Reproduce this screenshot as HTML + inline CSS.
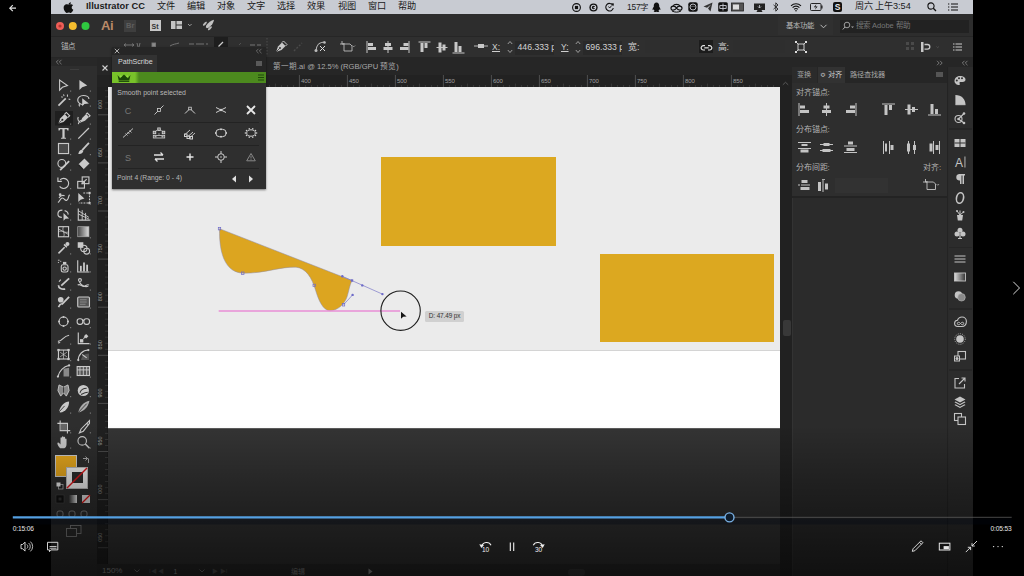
<!DOCTYPE html>
<html lang="zh-CN"><head><meta charset="utf-8">
<style>
*{margin:0;padding:0;box-sizing:border-box}
html,body{width:1024px;height:576px;overflow:hidden;background:#000;font-family:"Liberation Sans",sans-serif;position:relative}
.a{position:absolute}
.t{position:absolute;white-space:nowrap;line-height:1}
svg{position:absolute;overflow:visible}
</style></head><body>
<!-- ===== MAC MENU BAR ===== -->
<div class="a" style="left:51px;top:0;width:922px;height:14px;background:#c8cbd2"></div>
<div class="t" style="left:86px;top:2.200px;font-size:9.300px;font-weight:bold;color:#1a1a1a">Illustrator CC</div>
<svg style="left:64px;top:2px" width="10" height="11" viewBox="0 0 10 11"><path d="M6.9 0.2C7 1 6.7 1.7 6.2 2.2 5.8 2.7 5.1 3 4.500 2.900 4.400 2.200 4.800 1.500 5.200 1 5.700 0.500 6.400 0.200 6.900 0.200z" fill="#111"/><path d="M9.3 7.700C9 8.400 8.800 8.800 8.400 9.400 7.800 10.200 7.200 10.900 6.400 10.900 5.700 10.900 5.400 10.500 4.600 10.500 3.800 10.500 3.500 10.900 2.700 10.900 1.900 10.900 1.300 10.100 0.800 9.300-0.600 7.200-0.700 4.700 0.300 3.500 1 2.600 1.900 2.200 2.800 2.200 3.700 2.200 4.200 2.700 4.900 2.700 5.600 2.700 6 2.200 7 2.200 7.800 2.200 8.500 2.600 9.100 3.300 7.100 4.400 7.400 7.200 9.300 7.700z" fill="#111"/></svg>
<div class="t" style="left:157px;top:2.200px;font-size:9.200px;color:#1a1a1a">文件</div>
<div class="t" style="left:187px;top:2.200px;font-size:9.200px;color:#1a1a1a">编辑</div>
<div class="t" style="left:217px;top:2.200px;font-size:9.200px;color:#1a1a1a">对象</div>
<div class="t" style="left:247px;top:2.200px;font-size:9.200px;color:#1a1a1a">文字</div>
<div class="t" style="left:277px;top:2.200px;font-size:9.200px;color:#1a1a1a">选择</div>
<div class="t" style="left:307px;top:2.200px;font-size:9.200px;color:#1a1a1a">效果</div>
<div class="t" style="left:338px;top:2.200px;font-size:9.200px;color:#1a1a1a">视图</div>
<div class="t" style="left:368px;top:2.200px;font-size:9.200px;color:#1a1a1a">窗口</div>
<div class="t" style="left:398px;top:2.200px;font-size:9.200px;color:#1a1a1a">帮助</div>
<!-- status icons -->
<svg style="left:572px;top:2.500px" width="9" height="9"><circle cx="4.5" cy="4.5" r="3.9" fill="none" stroke="#111" stroke-width="1.1"/><rect x="2.900" y="2.900" width="3.200" height="3.200" fill="#111"/></svg>
<svg style="left:589px;top:3px" width="9" height="9"><circle cx="4.5" cy="4.5" r="4.1" fill="#111"/><circle cx="4.5" cy="4.5" r="2.2" fill="none" stroke="#c8cbd2" stroke-width="1.1"/><rect x="4.5" y="4" width="2.5" height="1.2" fill="#c8cbd2"/></svg>
<svg style="left:605px;top:2px" width="10" height="10"><path d="M7.8 3.2A3.8 3.8 0 1 0 8.3 6" fill="none" stroke="#111" stroke-width="1.1"/><path d="M6.2 1.2L9 1.6 8.3 4.2z" fill="#111"/><path d="M3.5 4.5l1.2 1.5 2-2.5" fill="none" stroke="#111" stroke-width="0.9"/></svg>
<div class="t" style="left:627px;top:2.700px;font-size:8.400px;color:#1a1a1a;letter-spacing:-0.2px">157字</div>
<svg style="left:652px;top:2px" width="9" height="11"><path d="M4.5 0.5C2.7 0.5 1.8 2 1.8 3.5v1.2C1 5.7 0.4 6.8 0.6 8c0.3 0.3 0.8-0.4 1-0.8 0.2 0.8 0.6 1.4 1.1 1.8-0.6 0.2-1 0.5-0.8 0.9 0.4 0.3 2 0.2 2.6-0.1 0.6 0.3 2.2 0.4 2.6 0.1 0.2-0.4-0.2-0.7-0.8-0.9 0.5-0.4 0.9-1 1.1-1.8 0.2 0.4 0.7 1.1 1 0.8 0.2-1.2-0.4-2.3-1.2-3.3V3.5C7.2 2 6.3 0.5 4.5 0.5z" fill="#111"/></svg>
<svg style="left:670px;top:2.500px" width="13" height="10"><path d="M6.500 5C5 2.500 1 2.500 1 5.200S5 7.800 6.500 5 12 2.500 12 5.200 8 7.800 6.500 5" fill="none" stroke="#111" stroke-width="1.200"/><path d="M3 3.200C4 0.800 9 0.800 10 3.200" fill="none" stroke="#111" stroke-width="1.100"/><path d="M2 8c3 1.500 6 1.500 9 0" fill="none" stroke="#111" stroke-width="1"/></svg>
<svg style="left:688px;top:2px" width="10" height="10"><rect x="0.3" y="0.3" width="9.4" height="9.4" rx="2" fill="#111"/><circle cx="5" cy="5" r="3" fill="none" stroke="#c8cbd2" stroke-width="0.9"/><circle cx="4" cy="4.3" r="0.5" fill="#c8cbd2"/><circle cx="6" cy="4.3" r="0.5" fill="#c8cbd2"/></svg>
<svg style="left:703px;top:2px" width="10" height="10"><path d="M0.5 4.5L9.5 0.5 7.5 9.5 5 6.5 8 2.5 4 5.8z" fill="#333"/></svg>
<svg style="left:718px;top:2px" width="10" height="10"><rect x="0.2" y="0.2" width="9.6" height="9.6" rx="1.5" fill="#111"/><path d="M5 1.5v7M1.8 3.5h6.4v3H1.8z" fill="none" stroke="#c8cbd2" stroke-width="0.9"/></svg>
<svg style="left:731px;top:2px" width="13" height="10"><rect x="0.5" y="1" width="12" height="8" fill="#555" stroke="#222" stroke-width="0.8"/><rect x="2" y="2.5" width="6" height="5" fill="#ddd"/></svg>
<svg style="left:753px;top:2px" width="13" height="11"><path d="M1 1.500h11v6.500H1z" fill="#222"/><path d="M4.500 8h4l1 2h-6z" fill="#222"/><path d="M6.500 3v3M5 4.500l1.500 1.500 1.500-1.500" stroke="#c8cbd2" stroke-width="0.800" fill="none"/></svg>
<svg style="left:773px;top:2px" width="6" height="10"><path d="M0.5 2.8L5 7 2.8 9.2V0.8L5 3 0.5 7.2" fill="none" stroke="#222" stroke-width="0.9"/></svg>
<svg style="left:790px;top:2px" width="12" height="10"><path d="M1 3.8a7 7 0 0 1 10 0M2.6 5.6a4.6 4.6 0 0 1 6.8 0M4.2 7.3a2.3 2.3 0 0 1 3.6 0" fill="none" stroke="#111" stroke-width="1.1"/><circle cx="6" cy="8.8" r="0.8" fill="#111"/></svg>
<svg style="left:810px;top:3px" width="13" height="8"><rect x="0.5" y="0.5" width="10.5" height="7" rx="1" fill="none" stroke="#111" stroke-width="0.9"/><rect x="11.3" y="2.5" width="1.2" height="3" fill="#111"/><path d="M6.5 1L3.8 4.3h2.2L4.8 7 7.6 3.6H5.4z" fill="#111"/></svg>
<svg style="left:833px;top:2px" width="9" height="10"><rect x="0" y="0" width="9" height="10" rx="2" fill="#111"/><text x="4.5" y="8" font-size="8.5" font-weight="bold" text-anchor="middle" fill="#e8e8e8" font-family="Liberation Sans">S</text></svg>
<div class="t" style="left:854.500px;top:2.200px;font-size:9.100px;color:#1a1a1a">周六 上午3:54</div>
<svg style="left:927px;top:2px" width="10" height="10"><circle cx="4" cy="4" r="3.1" fill="none" stroke="#111" stroke-width="1.1"/><path d="M6.3 6.3L9 9" stroke="#111" stroke-width="1.3"/></svg>
<svg style="left:948px;top:3px" width="10" height="8"><path d="M0 1h1.3M3 1h7M0 4h1.3M3 4h7M0 7h1.3M3 7h7" stroke="#111" stroke-width="1.1"/></svg>


<!-- ===== AI TITLE BAR ===== -->
<div class="a" style="left:51px;top:14px;width:922px;height:22px;background:#2d2d2d"></div>
<svg style="left:55px;top:21px" width="40" height="10"><circle cx="5" cy="5" r="4" fill="#ef5e57"/><circle cx="5" cy="5" r="1.6" fill="#8c1c18" opacity="0.6"/><circle cx="17.8" cy="5" r="4" fill="#f6be2e"/><circle cx="30.5" cy="5" r="4" fill="#2fc840"/></svg>
<div class="t" style="left:101px;top:18.500px;font-size:13px;color:#b98a68;font-weight:bold;letter-spacing:-0.5px">Ai</div>
<div class="a" style="left:124px;top:19.500px;width:12px;height:12px;background:#3e3e3e"></div>
<div class="t" style="left:126px;top:22px;font-size:7.500px;color:#5e5e5e;font-weight:bold">Br</div>
<div class="a" style="left:150px;top:20px;width:11px;height:11px;background:#c8c8c8"></div>
<div class="t" style="left:151.5px;top:22.5px;font-size:7px;color:#333;font-weight:bold">St</div>
<svg style="left:171px;top:21px" width="24" height="10"><rect x="0" y="0" width="4.5" height="8" fill="#c4c4c4"/><rect x="5.5" y="0" width="5.5" height="3.5" fill="#c4c4c4"/><rect x="5.5" y="4.5" width="5.5" height="3.5" fill="#c4c4c4"/><path d="M17 3l1.8 1.8L20.6 3" fill="none" stroke="#aaa" stroke-width="0.9"/></svg>
<svg style="left:200px;top:17px" width="16" height="16" viewBox="200 17 16 16"><path d="M214 19.800C211 20.300 208.300 22.500 206.200 25.600L205.800 27.200 206.900 28.300 208.500 27.800C211.500 25.700 213.600 23 214 19.800z" fill="#c4c4c4"/><ellipse cx="204.900" cy="23.700" rx="2.600" ry="1.100" transform="rotate(-45 204.900 23.700)" fill="#b8b8b8"/><ellipse cx="209.900" cy="28.300" rx="2.600" ry="1.100" transform="rotate(-45 209.900 28.300)" fill="#b8b8b8"/></svg>
<div class="a" style="left:777.500px;top:15px;width:55.500px;height:20px;background:#303030"></div>
<div class="t" style="left:786px;top:21.5px;font-size:7.400px;color:#bbb">基本功能</div>
<svg style="left:820px;top:24px" width="7" height="5"><path d="M0.5 0.8L3.500 3.800 6.500 0.800" fill="none" stroke="#bbb" stroke-width="1"/></svg>
<div class="a" style="left:839.500px;top:19.500px;width:129.500px;height:13px;background:#222222"></div>
<svg style="left:842px;top:21px" width="14" height="10"><circle cx="5" cy="4" r="2.8" fill="none" stroke="#aaa" stroke-width="0.9"/><path d="M3 6L0.8 8.5" stroke="#aaa" stroke-width="1"/><path d="M9 5.5l1.500 1.500 1.500-1.500z" fill="#aaa"/></svg>
<div class="t" style="left:856px;top:21.5px;font-size:7.5px;color:#777">搜索 Adobe 帮助</div>
<!-- ===== CONTROL BAR ===== -->
<div class="a" style="left:51px;top:35.500px;width:922px;height:1px;background:#262626"></div>
<div class="a" style="left:51px;top:36.500px;width:922px;height:20px;background:#2f2f2f"></div>
<div class="a" style="left:51px;top:56.500px;width:922px;height:1.500px;background:#262626"></div>
<div class="t" style="left:61px;top:42.5px;font-size:7.5px;color:#bdbdbd">锚点</div>
<!-- faint icons under panel -->
<svg style="left:122px;top:40.500px" width="150" height="8"><g stroke="#7a7a7a" stroke-width="0.9" fill="none"><path d="M2 4h10M2 4l2-1.5M2 4l2 1.5M12 4l-2-1.5M12 4l-2 1.5"/><path d="M15 2l1 4M18 2l-1 4"/><rect x="30" y="2" width="3.5" height="3.5" fill="#8a8a8a"/><path d="M48 5c3-2 6-2 9-3"/><path d="M67 3h5M74 3h8M84 3h2"/></g><rect x="92" y="-4" width="14" height="13" fill="#1e1e1e"/><path d="M96.500 5.500l4.500-4.500" stroke="#ccc" stroke-width="1.2"/><path d="M117 4l2-2" stroke="#555" stroke-width="0.9"/><path d="M128 4h5M135 4h4" stroke="#777" stroke-width="1"/></svg>
<svg style="left:266px;top:38px" width="3" height="18"><path d="M1 0v18" stroke="#555" stroke-width="0.8" stroke-dasharray="1.5 1.5"/></svg>
<!-- pen icon -->
<svg style="left:275px;top:40px" width="13" height="13"><path d="M1 12L3 6.500 7 2.500 10.500 6 6.500 10z" fill="#c8c8c8"/><path d="M7 2.500L8.500 1 12 4.500 10.500 6" fill="none" stroke="#c8c8c8" stroke-width="1"/><path d="M1 12l3.500-3.500" stroke="#2c2c2c" stroke-width="0.8"/><circle cx="5" cy="8" r="0.9" fill="#2c2c2c"/></svg>
<svg style="left:293px;top:41px" width="11" height="11"><path d="M1 10l8-8" stroke="#4a4a4a" stroke-width="1.4" stroke-dasharray="2 1.5"/></svg>
<svg style="left:314px;top:40px" width="13" height="13"><path d="M2 11c0-5 3-9 9-9" fill="none" stroke="#bbb" stroke-width="1.1"/><circle cx="10.500" cy="2.500" r="1.300" fill="#bbb"/><circle cx="2" cy="10.500" r="1.500" fill="#bbb"/><path d="M6 6l5 5M11 6l-5 5" stroke="#ddd" stroke-width="1"/></svg>
<svg style="left:340px;top:41px" width="16" height="11"><path d="M2 0v3h8l2 2v5H4V2" fill="none" stroke="#bbb" stroke-width="0.9"/><path d="M0 3h4" stroke="#bbb" stroke-width="0.9"/><path d="M12.500 4.500l1.300 1.300 1.300-1.300" fill="none" stroke="#aaa" stroke-width="0.8"/></svg>
<!-- align icons -->
<svg style="left:366px;top:40px" width="100" height="14"><g fill="#c8c8c8">
<rect x="0.500" y="1" width="1" height="12"/><rect x="2" y="3" width="5" height="3"/><rect x="2" y="7" width="8" height="3"/>
<rect x="21.500" y="1" width="1" height="12"/><rect x="19" y="3" width="6" height="3"/><rect x="17.500" y="7" width="9" height="3"/>
<rect x="42.500" y="1" width="1" height="12"/><rect x="37.500" y="3" width="5" height="3"/><rect x="34" y="7" width="8.500" height="3"/>
<rect x="52.500" y="1.500" width="12" height="1"/><rect x="54.500" y="3" width="3" height="9"/><rect x="58.500" y="3" width="3" height="5"/>
<rect x="70.500" y="7" width="11" height="1"/><rect x="72.500" y="2.500" width="3" height="10"/><rect x="76.500" y="4.500" width="3" height="6"/>
<rect x="86.500" y="12.500" width="12" height="1"/><rect x="88.500" y="2" width="3" height="10"/><rect x="92.500" y="6" width="3" height="6"/></g></svg>
<svg style="left:474px;top:42px" width="14" height="8"><path d="M0 4h14" stroke="#bbb" stroke-width="1"/><rect x="4" y="2" width="6" height="4" fill="#c8c8c8"/></svg>
<div class="t" style="left:492px;top:43px;font-size:8.500px;color:#cfcfcf;text-decoration:underline">X:</div>
<svg style="left:507px;top:40px" width="6" height="14"><path d="M0.800 4L3 1.500 5.200 4M0.800 10L3 12.500 5.200 10" fill="none" stroke="#aaa" stroke-width="0.9"/></svg>
<div class="a" style="left:515px;top:40.500px;width:38.500px;height:14px;background:#292929;overflow:hidden"><div class="t" style="left:2.500px;top:2.500px;font-size:8.700px;color:#d2d2d2">446.333 p</div></div>
<div class="t" style="left:561px;top:43px;font-size:8.500px;color:#cfcfcf;text-decoration:underline">Y:</div>
<svg style="left:575px;top:40px" width="6" height="14"><path d="M0.800 4L3 1.500 5.200 4M0.800 10L3 12.500 5.200 10" fill="none" stroke="#aaa" stroke-width="0.9"/></svg>
<div class="a" style="left:583px;top:40.500px;width:39px;height:14px;background:#292929;overflow:hidden"><div class="t" style="left:2.500px;top:2.500px;font-size:8.700px;color:#d2d2d2">696.333 p</div></div>
<div class="t" style="left:628px;top:42.500px;font-size:8.800px;color:#cfcfcf">宽:</div>
<div class="a" style="left:645px;top:40px;width:53px;height:13px;background:#2e2e2e"></div>
<div class="a" style="left:699px;top:40px;width:14px;height:13.300px;background:#1c1c1c"></div>
<svg style="left:700.500px;top:44.500px" width="11" height="6"><path d="M4 0.700H2.300a2.100 2.100 0 0 0 0 4.300H4M7 0.700h1.700a2.100 2.100 0 0 1 0 4.300H7" fill="none" stroke="#e0e0e0" stroke-width="1.200"/><path d="M3.300 2.850h4.400" stroke="#e0e0e0" stroke-width="1.200"/></svg>
<div class="t" style="left:717.500px;top:42.500px;font-size:8.800px;color:#cfcfcf">高:</div>
<div class="a" style="left:733px;top:40px;width:52px;height:13px;background:#2e2e2e"></div>
<svg style="left:795px;top:41px" width="12" height="12"><g fill="none" stroke="#ccc" stroke-width="1"><rect x="3" y="3" width="6" height="6"/><path d="M0.500 0.500l3 3M11.500 0.500l-3 3M0.500 11.500l3-3M11.500 11.500l-3-3"/></g><g fill="#ddd"><rect x="0" y="0" width="2" height="2"/><rect x="10" y="0" width="2" height="2"/><rect x="0" y="10" width="2" height="2"/><rect x="10" y="10" width="2" height="2"/></g></svg>
<svg style="left:906px;top:42px" width="8" height="8"><g fill="#4a4a4a"><rect x="0" y="0" width="3" height="3"/><rect x="5" y="0" width="3" height="3"/><rect x="0" y="5" width="3" height="3"/><rect x="5" y="5" width="3" height="3"/></g></svg>
<svg style="left:921px;top:41px" width="20" height="12"><rect x="0" y="1" width="2.500" height="10" fill="#c8c8c8"/><path d="M3.500 3.500h3a2.300 2.300 0 0 1 0 4.600h-3" fill="none" stroke="#c8c8c8" stroke-width="1.300"/><path d="M15.500 5.500l1.200 1.200 1.200-1.200" fill="none" stroke="#555" stroke-width="0.8"/></svg>
<svg style="left:953px;top:43px" width="9" height="8"><path d="M0 1h1.500M2.500 1H9M0 4h1.500M2.500 4H9M0 7h1.500M2.500 7H9" stroke="#ccc" stroke-width="1.100"/></svg>

<!-- ===== LEFT TOOLBAR ===== -->
<div class="a" style="left:51px;top:58px;width:46px;height:518px;background:#2e2e2e"></div>
<div class="a" style="left:51px;top:58px;width:46px;height:8px;background:#282828"></div>
<svg style="left:55px;top:59px" width="8" height="6"><path d="M3.500 0.800L1.300 3 3.500 5.200M6.500 0.800L4.300 3 6.500 5.200" fill="none" stroke="#888" stroke-width="0.800"/></svg>
<div class="a" style="left:70px;top:69px;width:9px;height:1px;background:#3d3d3d"></div>

<svg style="left:51px;top:58px" width="46" height="400" viewBox="51 58 46 400">
<rect x="55" y="111" width="18" height="14.500" fill="#1f1f1f"/>
<g transform="translate(56.80,78.30) scale(1.12)"><path d="M2.500 1.500L2.500 10.500 5 8 9.500 6.500z" fill="none" stroke="#c9c9c9" stroke-width="1"/></g>
<rect x="70.0" y="90.5" width="1.2" height="1.2" fill="#777"/>
<g transform="translate(76.60,78.30) scale(1.12)"><path d="M2.500 1.500L2.500 10.500 5 8 9.500 6.500z" fill="#c9c9c9"/></g>
<rect x="89.8" y="90.5" width="1.2" height="1.2" fill="#777"/>
<g transform="translate(56.80,93.30) scale(1.12)"><path d="M1.500 11L8 4.500" stroke="#c9c9c9" stroke-width="1.500"/><path d="M6 1l0.500 1.500M9.500 1v2M10.500 5l1.500 0.500M4 3l1.300 0.500" stroke="#c9c9c9" stroke-width="0.900"/></g>
<rect x="70.0" y="105.5" width="1.2" height="1.2" fill="#777"/>
<g transform="translate(76.60,93.30) scale(1.12)"><path d="M6 10c-3 0-5-2-5-4s2-4 5-4 5 1.500 5 3" fill="none" stroke="#c9c9c9" stroke-width="1"/><path d="M5 4.500L5 11.500 7 9.500 11 9z" fill="#c9c9c9"/><path d="M3 9c-1 1-1 2 0 2.500" fill="none" stroke="#c9c9c9" stroke-width="1"/></g>
<rect x="89.8" y="105.5" width="1.2" height="1.2" fill="#777"/>
<g transform="translate(56.80,111.30) scale(1.12)"><path d="M1.500 11L3 6.500 7 2.500 10 5.500 6 9.500z" fill="#c9c9c9"/><path d="M7 2.500L8.500 1 11.500 4 10 5.500" fill="none" stroke="#c9c9c9" stroke-width="1"/><circle cx="5" cy="7.500" r="0.900" fill="#222"/><path d="M1.500 11L4.500 8" stroke="#222" stroke-width="0.600"/></g>
<rect x="70.0" y="123.5" width="1.2" height="1.2" fill="#777"/>
<g transform="translate(76.60,111.30) scale(1.12)"><path d="M3.500 10L5 6 8.500 2.500 11 5 7.500 8.500z" fill="#c9c9c9"/><path d="M8.500 2.500L9.500 1.500 12 4 11 5" fill="none" stroke="#c9c9c9" stroke-width="1"/><path d="M5 8c-2 0-3 1.500-3.500 3.500" fill="none" stroke="#c9c9c9" stroke-width="1"/><path d="M1.500 5c-1 2 0 4 2 5" fill="none" stroke="#c9c9c9" stroke-width="1"/></g>
<rect x="89.8" y="123.5" width="1.2" height="1.2" fill="#777"/>
<g transform="translate(56.80,126.30) scale(1.12)"><path d="M1.500 1.500h9v2.200h-1l-0.500-1h-2v7.500h1.200v1H3.800v-1H5V2.700H3l-0.500 1h-1z" fill="#c9c9c9"/></g>
<rect x="70.0" y="138.5" width="1.2" height="1.2" fill="#777"/>
<g transform="translate(76.60,126.30) scale(1.12)"><path d="M1.500 11L11 1.500" stroke="#c9c9c9" stroke-width="1.100"/></g>
<rect x="89.8" y="138.5" width="1.2" height="1.2" fill="#777"/>
<g transform="translate(56.80,141.80) scale(1.12)"><rect x="1.500" y="1.500" width="9" height="9" fill="#4a4a4a" stroke="#c9c9c9" stroke-width="1"/></g>
<rect x="70.0" y="154.0" width="1.2" height="1.2" fill="#777"/>
<g transform="translate(76.60,141.80) scale(1.12)"><path d="M11 1L5 7.500" stroke="#c9c9c9" stroke-width="1.600"/><path d="M4.500 7c-2 0-2.500 2-3 4 2 0 4-0.500 4.500-3z" fill="#c9c9c9"/></g>
<rect x="89.8" y="154.0" width="1.2" height="1.2" fill="#777"/>
<g transform="translate(56.80,157.30) scale(1.12)"><circle cx="4.500" cy="5.500" r="3.500" fill="none" stroke="#c9c9c9" stroke-width="1"/><path d="M3 11.500L11 3.500" stroke="#c9c9c9" stroke-width="1.600"/></g>
<rect x="70.0" y="169.5" width="1.2" height="1.2" fill="#777"/>
<g transform="translate(76.60,157.30) scale(1.12)"><path d="M7 1L11.500 5.500 6 11 1.500 6.500z" fill="#c9c9c9"/><path d="M1.500 6.500L6 11" stroke="#222" stroke-width="1.200"/></g>
<rect x="89.8" y="169.5" width="1.2" height="1.2" fill="#777"/>
<g transform="translate(56.80,175.80) scale(1.12)"><path d="M3 3.500a4.500 4.500 0 1 1-0.500 6" fill="none" stroke="#c9c9c9" stroke-width="1"/><path d="M1 1.500v3.500h3.500" fill="none" stroke="#c9c9c9" stroke-width="1"/></g>
<rect x="70.0" y="188.0" width="1.2" height="1.2" fill="#777"/>
<g transform="translate(76.60,175.80) scale(1.12)"><rect x="1" y="5" width="6" height="6" fill="none" stroke="#c9c9c9" stroke-width="1"/><rect x="5" y="1" width="6" height="6" fill="none" stroke="#c9c9c9" stroke-width="1"/><path d="M4.500 7.500L9 3" fill="none" stroke="#c9c9c9" stroke-width="1"/></g>
<rect x="89.8" y="188.0" width="1.2" height="1.2" fill="#777"/>
<g transform="translate(56.80,191.30) scale(1.12)"><path d="M1 10c2-1 2-4 4-4s2 3 4 2 1-4 2.500-5" fill="none" stroke="#c9c9c9" stroke-width="1"/><path d="M2 6c1-2 3-3 5-2" fill="none" stroke="#c9c9c9" stroke-width="1"/><circle cx="3" cy="3" r="1.200" fill="#c9c9c9"/></g>
<rect x="70.0" y="203.5" width="1.2" height="1.2" fill="#777"/>
<g transform="translate(76.60,191.30) scale(1.12)"><path d="M1.500 1.500L1.500 9.500 3.500 7.500 7 6.500z" fill="#c9c9c9"/><path d="M6 1.500h5.500v9H2" fill="none" stroke="#c9c9c9" stroke-width="0.900" stroke-dasharray="1.600 1"/><rect x="10.500" y="0.500" width="2" height="2" fill="#c9c9c9"/><rect x="10.500" y="9.500" width="2" height="2" fill="#c9c9c9"/></g>
<rect x="89.8" y="203.5" width="1.2" height="1.2" fill="#777"/>
<g transform="translate(56.80,207.30) scale(1.12)"><path d="M5 2.500c-2.500 0-4 1.500-4 3.500s1.500 3 3.500 3" fill="none" stroke="#c9c9c9" stroke-width="1"/><path d="M7 3c2 0.500 3.500 2 3 3.500" fill="none" stroke="#c9c9c9" stroke-width="1"/><path d="M6 5L6 12 7.800 10.200 11 10z" fill="#c9c9c9"/></g>
<rect x="70.0" y="219.5" width="1.2" height="1.2" fill="#777"/>
<g transform="translate(76.60,207.30) scale(1.12)"><path d="M1.500 1v10.500h10.500" fill="none" stroke="#c9c9c9" stroke-width="1"/><path d="M1.500 3L11 9M1.500 6L11 10.500M5 2.500v9M8 5v6.500" fill="none" stroke="#c9c9c9" stroke-width="0.800"/></g>
<rect x="89.8" y="219.5" width="1.2" height="1.2" fill="#777"/>
<g transform="translate(56.80,225.00) scale(1.12)"><rect x="1.500" y="1.500" width="9" height="9" fill="none" stroke="#c9c9c9" stroke-width="1"/><path d="M1.500 6c3-2 6 2 9 0M6 1.500c-2 3 2 6 0 9M1.500 3.500l9 5" fill="none" stroke="#c9c9c9" stroke-width="0.700"/></g>
<rect x="70.0" y="237.2" width="1.2" height="1.2" fill="#777"/>
<g transform="translate(76.60,225.00) scale(1.12)"><defs><linearGradient id="g1"><stop offset="0" stop-color="#444"/><stop offset="1" stop-color="#ddd"/></linearGradient></defs><rect x="1" y="1.500" width="10" height="9" fill="url(#g1)" stroke="#aaa" stroke-width="0.600"/></g>
<rect x="89.8" y="237.2" width="1.2" height="1.2" fill="#777"/>
<g transform="translate(56.80,241.10) scale(1.12)"><path d="M1.500 11L7 5.500" stroke="#c9c9c9" stroke-width="1.400"/><path d="M6.500 3L9 5.500" stroke="#c9c9c9" stroke-width="1.500"/><circle cx="9.500" cy="2.500" r="1.800" fill="#c9c9c9"/></g>
<rect x="70.0" y="253.3" width="1.2" height="1.2" fill="#777"/>
<g transform="translate(76.60,241.10) scale(1.12)"><rect x="1" y="1" width="5" height="5" fill="#c9c9c9"/><circle cx="6.500" cy="6.500" r="2.800" fill="none" stroke="#c9c9c9" stroke-width="1"/><circle cx="9" cy="9" r="2.600" fill="none" stroke="#c9c9c9" stroke-width="1"/></g>
<rect x="89.8" y="253.3" width="1.2" height="1.2" fill="#777"/>
<g transform="translate(56.80,259.10) scale(1.12)"><rect x="4" y="5" width="6" height="6.500" rx="1.500" fill="none" stroke="#c9c9c9" stroke-width="1"/><circle cx="7" cy="8.500" r="1.500" fill="none" stroke="#c9c9c9" stroke-width="1"/><rect x="5.500" y="2.500" width="3" height="2" fill="#c9c9c9"/><path d="M1 1h1.500M1 3h1M3 2h1" stroke="#c9c9c9" stroke-width="0.800"/></g>
<rect x="70.0" y="271.3" width="1.2" height="1.2" fill="#777"/>
<g transform="translate(76.60,259.10) scale(1.12)"><path d="M1 1v10.500h10.500" fill="none" stroke="#c9c9c9" stroke-width="1"/><rect x="3" y="6" width="1.600" height="5" fill="#c9c9c9"/><rect x="5.800" y="3" width="1.600" height="8" fill="#c9c9c9"/><rect x="8.600" y="5" width="1.600" height="6" fill="#c9c9c9"/></g>
<rect x="89.8" y="271.3" width="1.2" height="1.2" fill="#777"/>
<g transform="translate(56.80,277.30) scale(1.12)"><path d="M1.500 7c0 3 3 4 6 3.500" stroke="#c9c9c9" stroke-width="1.500" fill="none"/><path d="M4 7.500L11 1" stroke="#c9c9c9" stroke-width="1.600"/><path d="M2 4L3.500 2" stroke="#c9c9c9" stroke-width="1"/></g>
<rect x="70.0" y="289.5" width="1.2" height="1.2" fill="#777"/>
<g transform="translate(76.60,277.30) scale(1.12)"><path d="M1 7c2-2 4 2 6 1s3-2 4-1" fill="none" stroke="#c9c9c9" stroke-width="1"/><path d="M2.500 4c1.500 3 4 5 8 4" fill="none" stroke="#c9c9c9" stroke-width="1"/><circle cx="3" cy="2.500" r="1.300" fill="none" stroke="#c9c9c9" stroke-width="1"/></g>
<rect x="89.8" y="289.5" width="1.2" height="1.2" fill="#777"/>
<g transform="translate(56.80,295.30) scale(1.12)"><path d="M11 1.500L4.500 8" stroke="#c9c9c9" stroke-width="1.600"/><circle cx="3.500" cy="4" r="2.500" fill="#c9c9c9"/><path d="M1.500 10.500c1-2 2-3 3-2.500" stroke="#c9c9c9" stroke-width="1.500"/></g>
<rect x="70.0" y="307.5" width="1.2" height="1.2" fill="#777"/>
<g transform="translate(76.60,295.30) scale(1.12)"><rect x="1" y="1.500" width="10.500" height="9" rx="1" fill="#555" stroke="#c9c9c9" stroke-width="1"/><path d="M3 4h6M3 6h6M3 8h5" stroke="#999" stroke-width="0.700"/></g>
<rect x="89.8" y="307.5" width="1.2" height="1.2" fill="#777"/>
<g transform="translate(56.80,314.80) scale(1.12)"><circle cx="6" cy="6" r="4" fill="none" stroke="#c9c9c9" stroke-width="1"/><circle cx="6" cy="2" r="0.900" fill="#c9c9c9"/><circle cx="2" cy="6" r="0.900" fill="#c9c9c9"/><circle cx="10" cy="6" r="0.900" fill="#c9c9c9"/><circle cx="6" cy="10" r="0.900" fill="#c9c9c9"/></g>
<rect x="70.0" y="327.0" width="1.2" height="1.2" fill="#777"/>
<g transform="translate(76.60,314.80) scale(1.12)"><rect x="0.500" y="3.500" width="5" height="5" rx="2" fill="none" stroke="#c9c9c9" stroke-width="1"/><rect x="6.500" y="3.500" width="5" height="5" rx="2" fill="none" stroke="#c9c9c9" stroke-width="1"/><path d="M5.500 5h1" fill="none" stroke="#c9c9c9" stroke-width="1"/></g>
<rect x="89.8" y="327.0" width="1.2" height="1.2" fill="#777"/>
<g transform="translate(56.80,331.30) scale(1.12)"><path d="M1 9c2 0 3-1 4.500-2.500S8 4 11 3.500" fill="none" stroke="#c9c9c9" stroke-width="1"/><path d="M1 10.500l2-0.500" fill="none" stroke="#c9c9c9" stroke-width="1"/></g>
<rect x="70.0" y="343.5" width="1.2" height="1.2" fill="#777"/>
<g transform="translate(76.60,331.30) scale(1.12)"><path d="M1.500 1v10h10" fill="none" stroke="#c9c9c9" stroke-width="1"/><rect x="3" y="7" width="3" height="3" fill="#c9c9c9"/><path d="M8.500 2.500l2 2-2 2-2-2z" fill="#c9c9c9"/><path d="M6 6.500L8 5" fill="none" stroke="#c9c9c9" stroke-width="1"/></g>
<rect x="89.8" y="343.5" width="1.2" height="1.2" fill="#777"/>
<g transform="translate(56.80,347.80) scale(1.12)"><rect x="1.500" y="2" width="9" height="8" fill="none" stroke="#c9c9c9" stroke-width="1"/><path d="M3 4l6 4M9 4L3 8M6 2v8" fill="none" stroke="#c9c9c9" stroke-width="0.600"/><g fill="#c9c9c9"><rect x="0.500" y="1" width="2" height="2"/><rect x="9.500" y="1" width="2" height="2"/><rect x="0.500" y="9" width="2" height="2"/><rect x="9.500" y="9" width="2" height="2"/></g></g>
<rect x="70.0" y="360.0" width="1.2" height="1.2" fill="#777"/>
<g transform="translate(76.60,347.80) scale(1.12)"><path d="M1.500 11c0-5 4-9 9-9" fill="none" stroke="#c9c9c9" stroke-width="1"/><path d="M4 11c0-3 3-6 7-6v6z" fill="#555"/><path d="M5 6l4 3" fill="none" stroke="#c9c9c9" stroke-width="1"/><circle cx="1.500" cy="11" r="1" fill="#c9c9c9"/><circle cx="10.500" cy="2" r="1" fill="#c9c9c9"/></g>
<rect x="89.8" y="360.0" width="1.2" height="1.2" fill="#777"/>
<g transform="translate(56.80,364.30) scale(1.12)"><path d="M1 11c1-5 5-9 10-10" fill="none" stroke="#c9c9c9" stroke-width="1"/><path d="M6 4v7h5V3z" fill="#888"/><circle cx="1" cy="11" r="1" fill="#c9c9c9"/><circle cx="11" cy="1" r="1" fill="#c9c9c9"/></g>
<rect x="70.0" y="376.5" width="1.2" height="1.2" fill="#777"/>
<g transform="translate(76.60,364.30) scale(1.12)"><rect x="0.500" y="2" width="11" height="8" fill="#555" stroke="#c9c9c9" stroke-width="1"/><path d="M3 2v8M6 2v8M9 2v8M0.500 5h11" stroke="#c9c9c9" stroke-width="0.800"/></g>
<rect x="89.8" y="376.5" width="1.2" height="1.2" fill="#777"/>
<g transform="translate(56.80,383.80) scale(1.12)"><path d="M6 3L2 1 1 6 3.500 11 6 8 8.500 11 11 6 10 1z" fill="#888" stroke="#c9c9c9" stroke-width="0.800"/><path d="M6 3v5" stroke="#333" stroke-width="0.800"/></g>
<rect x="70.0" y="396.0" width="1.2" height="1.2" fill="#777"/>
<g transform="translate(76.60,383.80) scale(1.12)"><circle cx="6" cy="6" r="5" fill="#c9c9c9"/><path d="M3 8c1-3 3-4 6-4M4 9.500c2-1 4-2 6-2" stroke="#333" stroke-width="0.900" fill="none"/></g>
<rect x="89.8" y="396.0" width="1.2" height="1.2" fill="#777"/>
<g transform="translate(56.80,400.30) scale(1.12)"><path d="M11 1c-4 0-8 4-9 9l1 1c5-1 8-5 8-10z" fill="#c9c9c9"/><path d="M1 11.500L7 5" stroke="#333" stroke-width="0.800"/></g>
<rect x="70.0" y="412.5" width="1.2" height="1.2" fill="#777"/>
<g transform="translate(76.60,400.30) scale(1.12)"><path d="M11.500 0.500c-5 1-9 5-10 10.500 5-1 9-5 10-10.500z" fill="#aaa"/><path d="M1 11.500L9 3" stroke="#333" stroke-width="0.800"/></g>
<rect x="89.8" y="412.5" width="1.2" height="1.2" fill="#777"/>
<g transform="translate(56.80,420.00) scale(1.12)"><path d="M3 0.500v9h9" fill="none" stroke="#c9c9c9" stroke-width="1"/><path d="M0.500 3h9v9" fill="none" stroke="#c9c9c9" stroke-width="1"/><rect x="3.500" y="3.500" width="5.500" height="5.500" fill="#666"/></g>
<rect x="70.0" y="432.2" width="1.2" height="1.2" fill="#777"/>
<g transform="translate(76.60,420.00) scale(1.12)"><path d="M11.500 0.500L4 8 2.500 11.500 6 10 11.500 3z" fill="none" stroke="#c9c9c9" stroke-width="1"/><path d="M9 3l1 1" fill="none" stroke="#c9c9c9" stroke-width="1"/></g>
<rect x="89.8" y="432.2" width="1.2" height="1.2" fill="#777"/>
<g transform="translate(56.80,435.30) scale(1.12)"><path d="M3 11.500c-1-1-2.500-3-2.500-4.500 0-0.800 1.200-0.800 1.800 0l1 1.200V2.500c0-0.900 1.300-0.900 1.300 0V6V1.500c0-0.900 1.400-0.900 1.400 0V6V2c0-0.900 1.400-0.900 1.400 0v4.500V3.500c0-0.900 1.300-0.900 1.300 0V8c0 2-1 3.500-2 3.500z" fill="#c9c9c9"/></g>
<rect x="70.0" y="447.5" width="1.2" height="1.2" fill="#777"/>
<g transform="translate(76.60,435.30) scale(1.12)"><circle cx="5" cy="5" r="3.800" fill="none" stroke="#c9c9c9" stroke-width="1"/><path d="M7.800 7.800L11.500 11.500" stroke="#c9c9c9" stroke-width="1.400"/></g>
<rect x="89.8" y="447.5" width="1.2" height="1.2" fill="#777"/>
</svg>
<!-- fill / stroke -->
<div class="a" style="left:55px;top:455px;width:21.500px;height:21.500px;background:#eaaa1e;border:1px solid #d0d0d0"></div>
<div class="a" style="left:66px;top:466.500px;width:22px;height:22px;background:#f4f4f4;border:1px solid #bbb"></div>
<div class="a" style="left:71.500px;top:472px;width:11px;height:11px;background:#2e2e2e"></div>
<svg style="left:66px;top:466.500px" width="22" height="22"><path d="M1 21L21 1" stroke="#e0161b" stroke-width="1.500"/></svg>
<svg style="left:82px;top:455px" width="8" height="9"><path d="M1 3.500h4.500M3.500 1.500L5.500 3.500 3.500 5.500M6.500 3.500V8" fill="none" stroke="#c9c9c9" stroke-width="0.800"/></svg>
<svg style="left:56px;top:482px" width="8" height="7"><rect x="2.500" y="2.500" width="4.500" height="4.500" fill="#222" stroke="#ccc" stroke-width="0.700"/><rect x="0.500" y="0.500" width="4" height="4" fill="#eee"/></svg>
<svg style="left:55px;top:494px" width="36" height="10"><rect x="1" y="1" width="8" height="8" fill="#111" stroke="#444" stroke-width="0.600"/><rect x="3.500" y="3.500" width="3" height="3" fill="#333"/>
<defs><linearGradient id="g2"><stop offset="0" stop-color="#333"/><stop offset="1" stop-color="#eee"/></linearGradient></defs><rect x="14" y="1" width="8" height="8" fill="url(#g2)"/>
<rect x="27" y="1" width="8" height="8" fill="#ddd"/><path d="M27 9L35 1" stroke="#d11" stroke-width="1.200"/></svg>
<svg style="left:55px;top:509px" width="36" height="8"><g fill="none" stroke="#8a8a8a" stroke-width="0.900"><rect x="2" y="2" width="6" height="6" rx="2"/><rect x="14" y="2" width="6" height="6" rx="2"/><rect x="26" y="2" width="6" height="6" rx="2"/></g></svg>
<svg style="left:66px;top:525px" width="16" height="12"><rect x="4.500" y="0.500" width="10.500" height="8" fill="none" stroke="#888" stroke-width="0.900"/><rect x="0.500" y="3.500" width="10" height="8" fill="#2e2e2e" stroke="#888" stroke-width="0.900"/></svg>

<div class="a" style="left:97px;top:58px;width:11px;height:518px;background:#202020"></div>
<div class="a" style="left:107px;top:87px;width:1px;height:489px;background:#1a1a1a"></div>
<svg style="left:97px;top:87px" width="11" height="489" viewBox="0 87 11 489"><path d="M1 114.8H11" stroke="#555" stroke-width="0.8"/><path d="M8 90.7H11" stroke="#444" stroke-width="0.6"/><path d="M8 96.8H11" stroke="#444" stroke-width="0.6"/><path d="M8 102.8H11" stroke="#444" stroke-width="0.6"/><path d="M8 108.8H11" stroke="#444" stroke-width="0.6"/><text transform="translate(3.2,104.3) rotate(-90)" font-size="5.500" fill="#9a9a9a" text-anchor="middle" font-family="Liberation Sans" dominant-baseline="middle">600</text><path d="M1 162.9H11" stroke="#555" stroke-width="0.8"/><path d="M8 120.8H11" stroke="#444" stroke-width="0.6"/><path d="M8 126.8H11" stroke="#444" stroke-width="0.6"/><path d="M8 132.8H11" stroke="#444" stroke-width="0.6"/><path d="M8 138.8H11" stroke="#444" stroke-width="0.6"/><path d="M8 144.8H11" stroke="#444" stroke-width="0.6"/><path d="M8 150.9H11" stroke="#444" stroke-width="0.6"/><path d="M8 156.9H11" stroke="#444" stroke-width="0.6"/><text transform="translate(3.2,152.4) rotate(-90)" font-size="5.500" fill="#9a9a9a" text-anchor="middle" font-family="Liberation Sans" dominant-baseline="middle">650</text><path d="M1 211.0H11" stroke="#555" stroke-width="0.8"/><path d="M8 168.9H11" stroke="#444" stroke-width="0.6"/><path d="M8 174.9H11" stroke="#444" stroke-width="0.6"/><path d="M8 180.9H11" stroke="#444" stroke-width="0.6"/><path d="M8 186.9H11" stroke="#444" stroke-width="0.6"/><path d="M8 193.0H11" stroke="#444" stroke-width="0.6"/><path d="M8 199.0H11" stroke="#444" stroke-width="0.6"/><path d="M8 205.0H11" stroke="#444" stroke-width="0.6"/><text transform="translate(3.2,200.5) rotate(-90)" font-size="5.500" fill="#9a9a9a" text-anchor="middle" font-family="Liberation Sans" dominant-baseline="middle">700</text><path d="M1 259.1H11" stroke="#555" stroke-width="0.8"/><path d="M8 217.0H11" stroke="#444" stroke-width="0.6"/><path d="M8 223.0H11" stroke="#444" stroke-width="0.6"/><path d="M8 229.0H11" stroke="#444" stroke-width="0.6"/><path d="M8 235.0H11" stroke="#444" stroke-width="0.6"/><path d="M8 241.1H11" stroke="#444" stroke-width="0.6"/><path d="M8 247.1H11" stroke="#444" stroke-width="0.6"/><path d="M8 253.1H11" stroke="#444" stroke-width="0.6"/><text transform="translate(3.2,248.6) rotate(-90)" font-size="5.500" fill="#9a9a9a" text-anchor="middle" font-family="Liberation Sans" dominant-baseline="middle">750</text><path d="M1 307.2H11" stroke="#555" stroke-width="0.8"/><path d="M8 265.1H11" stroke="#444" stroke-width="0.6"/><path d="M8 271.1H11" stroke="#444" stroke-width="0.6"/><path d="M8 277.1H11" stroke="#444" stroke-width="0.6"/><path d="M8 283.1H11" stroke="#444" stroke-width="0.6"/><path d="M8 289.1H11" stroke="#444" stroke-width="0.6"/><path d="M8 295.2H11" stroke="#444" stroke-width="0.6"/><path d="M8 301.2H11" stroke="#444" stroke-width="0.6"/><text transform="translate(3.2,296.7) rotate(-90)" font-size="5.500" fill="#9a9a9a" text-anchor="middle" font-family="Liberation Sans" dominant-baseline="middle">800</text><path d="M1 355.3H11" stroke="#555" stroke-width="0.8"/><path d="M8 313.2H11" stroke="#444" stroke-width="0.6"/><path d="M8 319.2H11" stroke="#444" stroke-width="0.6"/><path d="M8 325.2H11" stroke="#444" stroke-width="0.6"/><path d="M8 331.2H11" stroke="#444" stroke-width="0.6"/><path d="M8 337.2H11" stroke="#444" stroke-width="0.6"/><path d="M8 343.3H11" stroke="#444" stroke-width="0.6"/><path d="M8 349.3H11" stroke="#444" stroke-width="0.6"/><text transform="translate(3.2,344.8) rotate(-90)" font-size="5.500" fill="#9a9a9a" text-anchor="middle" font-family="Liberation Sans" dominant-baseline="middle">850</text><path d="M1 403.4H11" stroke="#555" stroke-width="0.8"/><path d="M8 361.3H11" stroke="#444" stroke-width="0.6"/><path d="M8 367.3H11" stroke="#444" stroke-width="0.6"/><path d="M8 373.3H11" stroke="#444" stroke-width="0.6"/><path d="M8 379.3H11" stroke="#444" stroke-width="0.6"/><path d="M8 385.4H11" stroke="#444" stroke-width="0.6"/><path d="M8 391.4H11" stroke="#444" stroke-width="0.6"/><path d="M8 397.4H11" stroke="#444" stroke-width="0.6"/><text transform="translate(3.2,392.9) rotate(-90)" font-size="5.500" fill="#9a9a9a" text-anchor="middle" font-family="Liberation Sans" dominant-baseline="middle">900</text><path d="M1 451.5H11" stroke="#555" stroke-width="0.8"/><path d="M8 409.4H11" stroke="#444" stroke-width="0.6"/><path d="M8 415.4H11" stroke="#444" stroke-width="0.6"/><path d="M8 421.4H11" stroke="#444" stroke-width="0.6"/><path d="M8 427.4H11" stroke="#444" stroke-width="0.6"/><path d="M8 433.4H11" stroke="#444" stroke-width="0.6"/><path d="M8 439.5H11" stroke="#444" stroke-width="0.6"/><path d="M8 445.5H11" stroke="#444" stroke-width="0.6"/><text transform="translate(3.2,441.0) rotate(-90)" font-size="5.500" fill="#9a9a9a" text-anchor="middle" font-family="Liberation Sans" dominant-baseline="middle">950</text><path d="M1 499.6H11" stroke="#555" stroke-width="0.8"/><path d="M8 457.5H11" stroke="#444" stroke-width="0.6"/><path d="M8 463.5H11" stroke="#444" stroke-width="0.6"/><path d="M8 469.5H11" stroke="#444" stroke-width="0.6"/><path d="M8 475.5H11" stroke="#444" stroke-width="0.6"/><path d="M8 481.5H11" stroke="#444" stroke-width="0.6"/><path d="M8 487.6H11" stroke="#444" stroke-width="0.6"/><path d="M8 493.6H11" stroke="#444" stroke-width="0.6"/><text transform="translate(3.2,489.1) rotate(-90)" font-size="5.500" fill="#9a9a9a" text-anchor="middle" font-family="Liberation Sans" dominant-baseline="middle">000</text><path d="M1 547.7H11" stroke="#555" stroke-width="0.8"/><path d="M8 505.6H11" stroke="#444" stroke-width="0.6"/><path d="M8 511.6H11" stroke="#444" stroke-width="0.6"/><path d="M8 517.6H11" stroke="#444" stroke-width="0.6"/><path d="M8 523.6H11" stroke="#444" stroke-width="0.6"/><path d="M8 529.6H11" stroke="#444" stroke-width="0.6"/><path d="M8 535.7H11" stroke="#444" stroke-width="0.6"/><path d="M8 541.7H11" stroke="#444" stroke-width="0.6"/><text transform="translate(3.2,537.2) rotate(-90)" font-size="5.500" fill="#9a9a9a" text-anchor="middle" font-family="Liberation Sans" dominant-baseline="middle">050</text></svg>
<div class="a" style="left:97px;top:56.500px;width:695px;height:18.500px;background:#262626"></div>
<svg style="left:101px;top:64px" width="8" height="8"><path d="M1.500 1.500L6.500 6.500M6.500 1.500L1.500 6.500" stroke="#d0d0d0" stroke-width="1.100"/></svg>
<div class="t" style="left:273px;top:63px;font-size:7.6px;color:#a8a8a8">第一期.ai @ 12.5% (RGB/GPU 预览)</div>
<div class="a" style="left:97px;top:75px;width:683px;height:12px;background:#222222"></div>

<svg style="left:108px;top:75px" width="672" height="12" viewBox="108 75 672 12"><path d="M113.4 85V87" stroke="#4a4a4a" stroke-width="0.6"/><path d="M119.4 85V87" stroke="#4a4a4a" stroke-width="0.6"/><path d="M125.4 85V87" stroke="#4a4a4a" stroke-width="0.6"/><path d="M131.4 83.5V87" stroke="#4a4a4a" stroke-width="0.6"/><path d="M137.4 85V87" stroke="#4a4a4a" stroke-width="0.6"/><path d="M143.5 85V87" stroke="#4a4a4a" stroke-width="0.6"/><path d="M149.5 85V87" stroke="#4a4a4a" stroke-width="0.6"/><path d="M155.4 75V87" stroke="#5a5a5a" stroke-width="0.8"/><text x="156.9" y="82.8" font-size="6" fill="#a0a0a0" font-family="Liberation Sans">250</text><path d="M161.4 85V87" stroke="#4a4a4a" stroke-width="0.6"/><path d="M167.4 85V87" stroke="#4a4a4a" stroke-width="0.6"/><path d="M173.4 85V87" stroke="#4a4a4a" stroke-width="0.6"/><path d="M179.4 83.5V87" stroke="#4a4a4a" stroke-width="0.6"/><path d="M185.4 85V87" stroke="#4a4a4a" stroke-width="0.6"/><path d="M191.5 85V87" stroke="#4a4a4a" stroke-width="0.6"/><path d="M197.5 85V87" stroke="#4a4a4a" stroke-width="0.6"/><path d="M203.4 75V87" stroke="#5a5a5a" stroke-width="0.8"/><text x="204.9" y="82.8" font-size="6" fill="#a0a0a0" font-family="Liberation Sans">300</text><path d="M209.4 85V87" stroke="#4a4a4a" stroke-width="0.6"/><path d="M215.4 85V87" stroke="#4a4a4a" stroke-width="0.6"/><path d="M221.4 85V87" stroke="#4a4a4a" stroke-width="0.6"/><path d="M227.4 83.5V87" stroke="#4a4a4a" stroke-width="0.6"/><path d="M233.4 85V87" stroke="#4a4a4a" stroke-width="0.6"/><path d="M239.5 85V87" stroke="#4a4a4a" stroke-width="0.6"/><path d="M245.5 85V87" stroke="#4a4a4a" stroke-width="0.6"/><path d="M251.4 75V87" stroke="#5a5a5a" stroke-width="0.8"/><text x="252.9" y="82.8" font-size="6" fill="#a0a0a0" font-family="Liberation Sans">350</text><path d="M257.4 85V87" stroke="#4a4a4a" stroke-width="0.6"/><path d="M263.4 85V87" stroke="#4a4a4a" stroke-width="0.6"/><path d="M269.4 85V87" stroke="#4a4a4a" stroke-width="0.6"/><path d="M275.4 83.5V87" stroke="#4a4a4a" stroke-width="0.6"/><path d="M281.4 85V87" stroke="#4a4a4a" stroke-width="0.6"/><path d="M287.5 85V87" stroke="#4a4a4a" stroke-width="0.6"/><path d="M293.5 85V87" stroke="#4a4a4a" stroke-width="0.6"/><path d="M299.4 75V87" stroke="#5a5a5a" stroke-width="0.8"/><text x="300.9" y="82.8" font-size="6" fill="#a0a0a0" font-family="Liberation Sans">400</text><path d="M305.4 85V87" stroke="#4a4a4a" stroke-width="0.6"/><path d="M311.4 85V87" stroke="#4a4a4a" stroke-width="0.6"/><path d="M317.4 85V87" stroke="#4a4a4a" stroke-width="0.6"/><path d="M323.4 83.5V87" stroke="#4a4a4a" stroke-width="0.6"/><path d="M329.4 85V87" stroke="#4a4a4a" stroke-width="0.6"/><path d="M335.5 85V87" stroke="#4a4a4a" stroke-width="0.6"/><path d="M341.5 85V87" stroke="#4a4a4a" stroke-width="0.6"/><path d="M347.4 75V87" stroke="#5a5a5a" stroke-width="0.8"/><text x="348.9" y="82.8" font-size="6" fill="#a0a0a0" font-family="Liberation Sans">450</text><path d="M353.4 85V87" stroke="#4a4a4a" stroke-width="0.6"/><path d="M359.4 85V87" stroke="#4a4a4a" stroke-width="0.6"/><path d="M365.4 85V87" stroke="#4a4a4a" stroke-width="0.6"/><path d="M371.4 83.5V87" stroke="#4a4a4a" stroke-width="0.6"/><path d="M377.4 85V87" stroke="#4a4a4a" stroke-width="0.6"/><path d="M383.5 85V87" stroke="#4a4a4a" stroke-width="0.6"/><path d="M389.5 85V87" stroke="#4a4a4a" stroke-width="0.6"/><path d="M395.4 75V87" stroke="#5a5a5a" stroke-width="0.8"/><text x="396.9" y="82.8" font-size="6" fill="#a0a0a0" font-family="Liberation Sans">500</text><path d="M401.4 85V87" stroke="#4a4a4a" stroke-width="0.6"/><path d="M407.4 85V87" stroke="#4a4a4a" stroke-width="0.6"/><path d="M413.4 85V87" stroke="#4a4a4a" stroke-width="0.6"/><path d="M419.4 83.5V87" stroke="#4a4a4a" stroke-width="0.6"/><path d="M425.4 85V87" stroke="#4a4a4a" stroke-width="0.6"/><path d="M431.5 85V87" stroke="#4a4a4a" stroke-width="0.6"/><path d="M437.5 85V87" stroke="#4a4a4a" stroke-width="0.6"/><path d="M443.4 75V87" stroke="#5a5a5a" stroke-width="0.8"/><text x="444.9" y="82.8" font-size="6" fill="#a0a0a0" font-family="Liberation Sans">550</text><path d="M449.4 85V87" stroke="#4a4a4a" stroke-width="0.6"/><path d="M455.4 85V87" stroke="#4a4a4a" stroke-width="0.6"/><path d="M461.4 85V87" stroke="#4a4a4a" stroke-width="0.6"/><path d="M467.4 83.5V87" stroke="#4a4a4a" stroke-width="0.6"/><path d="M473.4 85V87" stroke="#4a4a4a" stroke-width="0.6"/><path d="M479.5 85V87" stroke="#4a4a4a" stroke-width="0.6"/><path d="M485.5 85V87" stroke="#4a4a4a" stroke-width="0.6"/><path d="M491.4 75V87" stroke="#5a5a5a" stroke-width="0.8"/><text x="492.9" y="82.8" font-size="6" fill="#a0a0a0" font-family="Liberation Sans">600</text><path d="M497.4 85V87" stroke="#4a4a4a" stroke-width="0.6"/><path d="M503.4 85V87" stroke="#4a4a4a" stroke-width="0.6"/><path d="M509.4 85V87" stroke="#4a4a4a" stroke-width="0.6"/><path d="M515.4 83.5V87" stroke="#4a4a4a" stroke-width="0.6"/><path d="M521.4 85V87" stroke="#4a4a4a" stroke-width="0.6"/><path d="M527.5 85V87" stroke="#4a4a4a" stroke-width="0.6"/><path d="M533.5 85V87" stroke="#4a4a4a" stroke-width="0.6"/><path d="M539.4 75V87" stroke="#5a5a5a" stroke-width="0.8"/><text x="540.9" y="82.8" font-size="6" fill="#a0a0a0" font-family="Liberation Sans">650</text><path d="M545.4 85V87" stroke="#4a4a4a" stroke-width="0.6"/><path d="M551.4 85V87" stroke="#4a4a4a" stroke-width="0.6"/><path d="M557.4 85V87" stroke="#4a4a4a" stroke-width="0.6"/><path d="M563.4 83.5V87" stroke="#4a4a4a" stroke-width="0.6"/><path d="M569.4 85V87" stroke="#4a4a4a" stroke-width="0.6"/><path d="M575.5 85V87" stroke="#4a4a4a" stroke-width="0.6"/><path d="M581.5 85V87" stroke="#4a4a4a" stroke-width="0.6"/><path d="M587.4 75V87" stroke="#5a5a5a" stroke-width="0.8"/><text x="588.9" y="82.8" font-size="6" fill="#a0a0a0" font-family="Liberation Sans">700</text><path d="M593.4 85V87" stroke="#4a4a4a" stroke-width="0.6"/><path d="M599.4 85V87" stroke="#4a4a4a" stroke-width="0.6"/><path d="M605.4 85V87" stroke="#4a4a4a" stroke-width="0.6"/><path d="M611.4 83.5V87" stroke="#4a4a4a" stroke-width="0.6"/><path d="M617.4 85V87" stroke="#4a4a4a" stroke-width="0.6"/><path d="M623.5 85V87" stroke="#4a4a4a" stroke-width="0.6"/><path d="M629.5 85V87" stroke="#4a4a4a" stroke-width="0.6"/><path d="M635.4 75V87" stroke="#5a5a5a" stroke-width="0.8"/><text x="636.9" y="82.8" font-size="6" fill="#a0a0a0" font-family="Liberation Sans">750</text><path d="M641.4 85V87" stroke="#4a4a4a" stroke-width="0.6"/><path d="M647.4 85V87" stroke="#4a4a4a" stroke-width="0.6"/><path d="M653.4 85V87" stroke="#4a4a4a" stroke-width="0.6"/><path d="M659.4 83.5V87" stroke="#4a4a4a" stroke-width="0.6"/><path d="M665.4 85V87" stroke="#4a4a4a" stroke-width="0.6"/><path d="M671.5 85V87" stroke="#4a4a4a" stroke-width="0.6"/><path d="M677.5 85V87" stroke="#4a4a4a" stroke-width="0.6"/><path d="M683.4 75V87" stroke="#5a5a5a" stroke-width="0.8"/><text x="684.9" y="82.8" font-size="6" fill="#a0a0a0" font-family="Liberation Sans">800</text><path d="M689.4 85V87" stroke="#4a4a4a" stroke-width="0.6"/><path d="M695.4 85V87" stroke="#4a4a4a" stroke-width="0.6"/><path d="M701.4 85V87" stroke="#4a4a4a" stroke-width="0.6"/><path d="M707.4 83.5V87" stroke="#4a4a4a" stroke-width="0.6"/><path d="M713.4 85V87" stroke="#4a4a4a" stroke-width="0.6"/><path d="M719.5 85V87" stroke="#4a4a4a" stroke-width="0.6"/><path d="M725.5 85V87" stroke="#4a4a4a" stroke-width="0.6"/><path d="M731.4 75V87" stroke="#5a5a5a" stroke-width="0.8"/><text x="732.9" y="82.8" font-size="6" fill="#a0a0a0" font-family="Liberation Sans">850</text><path d="M737.4 85V87" stroke="#4a4a4a" stroke-width="0.6"/><path d="M743.4 85V87" stroke="#4a4a4a" stroke-width="0.6"/><path d="M749.4 85V87" stroke="#4a4a4a" stroke-width="0.6"/><path d="M755.4 83.5V87" stroke="#4a4a4a" stroke-width="0.6"/><path d="M761.4 85V87" stroke="#4a4a4a" stroke-width="0.6"/><path d="M767.5 85V87" stroke="#4a4a4a" stroke-width="0.6"/><path d="M773.5 85V87" stroke="#4a4a4a" stroke-width="0.6"/></svg>
<!-- canvas -->
<div class="a" style="left:108px;top:87px;width:672px;height:264px;background:#ebebeb"></div>
<div class="a" style="left:108px;top:350px;width:672px;height:1px;background:#d4d4d4"></div>
<div class="a" style="left:108px;top:351px;width:672px;height:77px;background:#ffffff"></div>
<div class="a" style="left:108px;top:428px;width:672px;height:148px;background:#343434"></div>
<div class="a" style="left:108px;top:427.500px;width:672px;height:1px;background:#5a5a5a"></div>
<!-- scrollbar strip -->
<div class="a" style="left:780px;top:75px;width:12px;height:501px;background:#2a2a2a"></div>

<!-- orange rects -->
<div class="a" style="left:381px;top:157px;width:175px;height:89px;background:#dca820"></div>
<div class="a" style="left:600px;top:254px;width:174px;height:88px;background:#dca820"></div>

<!-- shape -->
<svg style="left:0;top:0" width="1024" height="576" viewBox="0 0 1024 576">
<path d="M219.500 228.700 L352 280.500 C349.500 285 349 291 347 297 C344.500 304 338 310.500 330 310.700 C323 310.800 318.500 300 315.500 290 C312 278 306 268 296 267.200 C280 266.500 265 273.500 243 273.200 C226 272.500 219 255 219.500 228.700 Z" fill="#dca520" stroke="#8d8aa8" stroke-width="0.5"/>
<g stroke="#7b78c8" stroke-width="0.7" fill="none">
<path d="M342.300 276.300 L382.400 294.100"/>
<path d="M343.500 304.800 L352.600 294.900"/>
</g>
<g fill="#6d6ac8">
<rect x="218.300" y="227.500" width="2.400" height="2.400" fill="none" stroke="#6d6ac8" stroke-width="0.7"/>
<rect x="241.600" y="272" width="2.400" height="2.400" fill="none" stroke="#6d6ac8" stroke-width="0.7"/>
<rect x="313" y="284.200" width="2.400" height="2.400" fill="none" stroke="#6d6ac8" stroke-width="0.7"/>
<rect x="342.300" y="303.600" width="2.400" height="2.400" fill="none" stroke="#6d6ac8" stroke-width="0.7"/>
<rect x="350.800" y="279.300" width="2.400" height="2.400"/>
<circle cx="342.300" cy="276.300" r="1.200"/>
<circle cx="362.300" cy="285.400" r="1.200"/>
<circle cx="382.400" cy="294.100" r="1.200"/>
<circle cx="352.600" cy="294.900" r="1.200"/>
</g>
<path d="M218.700 311 H400" stroke="#e98ed6" stroke-width="1.300"/>
<circle cx="400.600" cy="310.700" r="19.700" fill="none" stroke="#1f1f1f" stroke-width="1.100"/>
<path d="M401 311.800 L401 318.800 L403.200 316.800 L406.600 316.600 Z" fill="#151515"/>
</svg>
<div class="a" style="left:425.300px;top:311.200px;width:38.700px;height:10.500px;background:#d0d0d0;border-radius:1.500px"></div>
<div class="t" style="left:428.800px;top:313.300px;font-size:6.4px;color:#303030;letter-spacing:-0.1px">D: 47.49 px</div>

<!-- ===== PATHSCRIBE PANEL ===== -->
<div class="a" style="left:111.500px;top:46.500px;width:154.300px;height:142.300px;background:#2f2f2f;box-shadow:0 1px 2px rgba(0,0,0,0.5)"></div>
<div class="a" style="left:111.500px;top:46.500px;width:154.300px;height:25.500px;background:#262626"></div>
<svg style="left:114px;top:47.500px" width="6" height="6"><path d="M0.800 0.800L5.200 5.200M5.200 0.800L0.800 5.200" stroke="#bbb" stroke-width="0.900"/></svg>
<svg style="left:255px;top:48px" width="8" height="6"><path d="M3.500 0.800L1.300 3 3.500 5.200M6.500 0.800L4.300 3 6.500 5.200" fill="none" stroke="#777" stroke-width="0.800"/></svg>
<div class="a" style="left:111.500px;top:55px;width:45.500px;height:17px;background:#323232"></div>
<div class="t" style="left:118px;top:58.800px;font-size:7.100px;color:#d8d8d8">PathScribe</div>
<div class="a" style="left:255.500px;top:60.500px;width:6px;height:5px;background:#5a5a5a"></div>
<div class="a" style="left:111.500px;top:72px;width:154.300px;height:11px;background:#4c8a1e"></div>
<div class="a" style="left:111.500px;top:72px;width:23px;height:11px;background:#78c22a"></div>
<div class="a" style="left:134.500px;top:72px;width:4px;height:11px;background:linear-gradient(to right,#78c22a,#4c8a1e)"></div>
<svg style="left:116.500px;top:73.500px" width="14" height="8"><path d="M0.500 1L3.200 4.200 7 0.600 10.800 4.200 13.500 1 12.300 6.200H1.700z" fill="#1a4508"/><circle cx="3.800" cy="2.200" r="0.900" fill="#8fd84a"/><circle cx="10.200" cy="2.200" r="0.900" fill="#8fd84a"/><rect x="1.700" y="6.600" width="10.600" height="1.300" fill="#1a4508"/></svg>
<svg style="left:257.500px;top:74px" width="6" height="7"><path d="M0 1h6M0 3.500h6M0 6h6" stroke="#1f4a0a" stroke-width="1.200"/></svg>
<div class="t" style="left:117.300px;top:89.500px;font-size:6.950px;color:#b8b8b8">Smooth point selected</div>

<div class="a" style="left:117.500px;top:121.5px;width:141.500px;height:1px;background:#232323"></div>
<div class="a" style="left:117.500px;top:144.5px;width:141.500px;height:1px;background:#232323"></div>
<div class="a" style="left:117.500px;top:167.8px;width:141.500px;height:1px;background:#232323"></div>
<svg style="left:122.0px;top:103.7px" width="12" height="12"><text x="6" y="9.500" font-size="9" fill="#777" text-anchor="middle" font-family="Liberation Sans">C</text></svg>
<svg style="left:153.0px;top:103.7px" width="12" height="12"><path d="M1.500 10.500L10.500 1.500" stroke="#d0d0d0" stroke-width="0.900"/><rect x="4.500" y="4.500" width="3" height="3" fill="#2f2f2f" stroke="#d0d0d0" stroke-width="0.800"/></svg>
<svg style="left:183.7px;top:103.7px" width="12" height="12"><path d="M1 9.500L6 4.500 11 9.500" fill="none" stroke="#d0d0d0" stroke-width="1"/><rect x="4.700" y="3.200" width="2.600" height="2.600" fill="#2f2f2f" stroke="#d0d0d0" stroke-width="0.800"/></svg>
<svg style="left:214.9px;top:103.7px" width="12" height="12"><path d="M1 3.500L11 8.500M1 8.500L11 3.500" stroke="#d0d0d0" stroke-width="1"/><circle cx="6" cy="6" r="1.200" fill="#d0d0d0"/></svg>
<svg style="left:245.0px;top:103.7px" width="12" height="12"><path d="M2 2L10 10M10 2L2 10" stroke="#e8e8e8" stroke-width="1.800"/></svg>
<svg style="left:122.0px;top:127.0px" width="12" height="12"><path d="M1 10.500L11 1.500" stroke="#d0d0d0" stroke-width="0.900"/><path d="M3.500 6.500l2 2M5.500 5l2 2M7.500 3.500l2 2" stroke="#d0d0d0" stroke-width="0.800"/></svg>
<svg style="left:153.0px;top:127.0px" width="12" height="12"><path d="M1.500 5.500c2-3.500 7-3.500 9 0" fill="none" stroke="#d0d0d0" stroke-width="0.900" stroke-dasharray="1.200 0.800"/><rect x="0.300" y="4.300" width="2.400" height="2.400" fill="none" stroke="#d0d0d0" stroke-width="1"/><rect x="9.300" y="4.300" width="2.400" height="2.400" fill="none" stroke="#d0d0d0" stroke-width="1"/><rect x="4.800" y="1" width="2.400" height="2.400" fill="none" stroke="#d0d0d0" stroke-width="1"/><rect x="0.300" y="8.500" width="11.400" height="2.500" fill="none" stroke="#d0d0d0" stroke-width="0.800"/><rect x="1.500" y="9.200" width="2" height="1.200" fill="#d0d0d0"/><rect x="8.500" y="9.200" width="2" height="1.200" fill="#d0d0d0"/><path d="M5.300 7h1.400" stroke="#d0d0d0" stroke-width="0.800"/></svg>
<svg style="left:183.7px;top:127.0px" width="12" height="12"><path d="M1 7.500L6 3M4 9.500L9 5M6 10.500l5-4.500" stroke="#d0d0d0" stroke-width="0.900"/><rect x="0.500" y="7" width="2.500" height="2.500" fill="none" stroke="#d0d0d0" stroke-width="1"/><rect x="3" y="9" width="2.500" height="2.500" fill="none" stroke="#d0d0d0" stroke-width="1"/><rect x="6" y="9.500" width="2.500" height="2.500" fill="none" stroke="#d0d0d0" stroke-width="1"/></svg>
<svg style="left:214.9px;top:127.0px" width="12" height="12"><rect x="0.800" y="2.300" width="10.400" height="7.400" rx="3.700" fill="none" stroke="#d0d0d0" stroke-width="1"/><g fill="#d0d0d0"><rect x="0" y="5.200" width="1.600" height="1.600"/><rect x="10.400" y="5.200" width="1.600" height="1.600"/><rect x="5.200" y="1.500" width="1.600" height="1.600"/><rect x="5.200" y="8.900" width="1.600" height="1.600"/></g></svg>
<svg style="left:245.0px;top:127.0px" width="12" height="12"><ellipse cx="6" cy="6" rx="4.300" ry="3.200" fill="none" stroke="#d0d0d0" stroke-width="1"/><g fill="#d0d0d0"><circle cx="11.60" cy="6.00" r="0.750"/><circle cx="10.53" cy="8.59" r="0.750"/><circle cx="7.73" cy="10.18" r="0.750"/><circle cx="4.27" cy="10.18" r="0.750"/><circle cx="1.47" cy="8.59" r="0.750"/><circle cx="0.40" cy="6.00" r="0.750"/><circle cx="1.47" cy="3.41" r="0.750"/><circle cx="4.27" cy="1.82" r="0.750"/><circle cx="7.73" cy="1.82" r="0.750"/><circle cx="10.53" cy="3.41" r="0.750"/></g></svg>
<svg style="left:122.0px;top:151.4px" width="12" height="12"><text x="6" y="9.500" font-size="9" fill="#777" text-anchor="middle" font-family="Liberation Sans">S</text></svg>
<svg style="left:153.0px;top:151.4px" width="12" height="12"><path d="M1 4h9M7.500 1.500L10 4M11 8H2M4.500 10.500L2 8" stroke="#e0e0e0" stroke-width="1.300" fill="none"/></svg>
<svg style="left:183.7px;top:151.4px" width="12" height="12"><path d="M6 2.500v7M2.500 6h7" stroke="#e8e8e8" stroke-width="1.400"/></svg>
<svg style="left:214.9px;top:151.4px" width="12" height="12"><circle cx="6" cy="6" r="3.300" fill="none" stroke="#d0d0d0" stroke-width="1"/><path d="M6 0v2.500M6 9.500V12M0 6h2.500M9.500 6H12" stroke="#d0d0d0" stroke-width="1"/><circle cx="6" cy="6" r="0.800" fill="#d0d0d0"/></svg>
<svg style="left:245.0px;top:151.4px" width="12" height="12"><path d="M6 2.500L10.300 9.800H1.700z" fill="none" stroke="#888" stroke-width="1"/><path d="M6 5v2.500M6 8.300v0.800" stroke="#888" stroke-width="0.900"/></svg>
<div class="t" style="left:117px;top:175px;font-size:6.8px;color:#b8b8b8">Point 4 (Range: 0 - 4)</div>
<svg style="left:231px;top:175px" width="6" height="8"><path d="M5 0.500L1 4 5 7.500z" fill="#e0e0e0"/></svg>
<svg style="left:248px;top:175px" width="6" height="8"><path d="M1 0.500L5 4 1 7.500z" fill="#e0e0e0"/></svg>

<!-- ===== RIGHT PANEL ===== -->
<div class="a" style="left:792px;top:58px;width:181px;height:518px;background:#2b2b2b"></div>
<div class="a" style="left:780px;top:75px;width:12px;height:501px;background:#212121"></div>
<div class="a" style="left:791.500px;top:83px;width:1px;height:493px;background:#333"></div>
<div class="a" style="left:783px;top:320px;width:7.500px;height:15.500px;border-radius:2px;background:#383838"></div>
<svg style="left:782px;top:81px" width="7" height="5"><path d="M0.800 3.800L3.500 1.300 6.200 3.800" fill="none" stroke="#666" stroke-width="0.800"/></svg>
<div class="a" style="left:792px;top:58px;width:181px;height:8.500px;background:#262626"></div>
<svg style="left:936px;top:59.500px" width="8" height="6"><path d="M1 0.800L3.200 3 1 5.200M4 0.800L6.200 3 4 5.200" fill="none" stroke="#8a8a8a" stroke-width="0.800"/></svg>
<svg style="left:961px;top:59.500px" width="8" height="6"><path d="M3.500 0.800L1.300 3 3.500 5.200M6.500 0.800L4.300 3 6.500 5.200" fill="none" stroke="#8a8a8a" stroke-width="0.800"/></svg>
<!-- tab row -->
<div class="a" style="left:792px;top:66.500px;width:154.500px;height:16.500px;background:#262626"></div>
<div class="a" style="left:792px;top:66.500px;width:25px;height:16.500px;background:#2b2b2b"></div>
<div class="a" style="left:818px;top:66.500px;width:26.500px;height:16.500px;background:#323232"></div>
<div class="t" style="left:797px;top:70.500px;font-size:7.2px;color:#a8a8a8">变换</div>
<div class="t" style="left:820px;top:70.500px;font-size:7.2px;color:#cfcfcf">≎ 对齐</div>
<div class="t" style="left:850px;top:70.500px;font-size:7.2px;color:#a8a8a8">路径查找器</div>
<div class="a" style="left:936px;top:72px;width:7px;height:5px;background:#555"></div>
<!-- panel body -->
<div class="a" style="left:792px;top:83px;width:154.500px;height:113px;background:#2e2e2e"></div>
<div class="a" style="left:792px;top:196px;width:154.500px;height:1.500px;background:#232323"></div>
<div class="t" style="left:795.500px;top:88.500px;font-size:8px;color:#b4b4b4">对齐锚点:</div>
<div class="t" style="left:795.500px;top:126px;font-size:8px;color:#b4b4b4">分布锚点:</div>
<div class="t" style="left:795.500px;top:164px;font-size:8px;color:#b4b4b4">分布间距:</div>
<div class="t" style="left:923px;top:164px;font-size:8px;color:#b4b4b4">对齐:</div>
<div class="a" style="left:835px;top:178px;width:53px;height:14.500px;background:#323232"></div>

<svg style="left:797.5px;top:102.5px" width="13" height="13"><rect x="0.500" y="0" width="1" height="13" fill="#c4c4c4"/><rect x="2" y="2.500" width="5" height="3" fill="#c4c4c4"/><rect x="2" y="7" width="9" height="3" fill="#c4c4c4"/></svg>
<svg style="left:820.0px;top:102.5px" width="13" height="13"><rect x="6" y="0" width="1" height="13" fill="#c4c4c4"/><rect x="3.500" y="2.500" width="6" height="3" fill="#c4c4c4"/><rect x="2" y="7" width="9" height="3" fill="#c4c4c4"/></svg>
<svg style="left:843.9px;top:102.5px" width="13" height="13"><rect x="11.500" y="0" width="1" height="13" fill="#c4c4c4"/><rect x="6" y="2.500" width="5" height="3" fill="#c4c4c4"/><rect x="2" y="7" width="9" height="3" fill="#c4c4c4"/></svg>
<svg style="left:881.5px;top:102.5px" width="13" height="13"><rect x="0" y="0.500" width="13" height="1" fill="#c4c4c4"/><rect x="2.500" y="2" width="3" height="10" fill="#c4c4c4"/><rect x="7" y="2" width="3" height="5" fill="#c4c4c4"/></svg>
<svg style="left:905.0px;top:102.5px" width="13" height="13"><rect x="0" y="6" width="13" height="1" fill="#c4c4c4"/><rect x="2.500" y="1.500" width="3" height="10" fill="#c4c4c4"/><rect x="7" y="4" width="3" height="5" fill="#c4c4c4"/></svg>
<svg style="left:927.9px;top:102.5px" width="13" height="13"><rect x="0" y="11.500" width="13" height="1" fill="#c4c4c4"/><rect x="2.500" y="1" width="3" height="10" fill="#c4c4c4"/><rect x="7" y="6" width="3" height="5" fill="#c4c4c4"/></svg>
<svg style="left:797.5px;top:140.5px" width="13" height="13"><rect x="0" y="1" width="13" height="1" fill="#c4c4c4"/><rect x="3.500" y="3" width="6" height="2" fill="#c4c4c4"/><rect x="0" y="7" width="13" height="1" fill="#c4c4c4"/><rect x="2.500" y="8.500" width="8" height="3" fill="#c4c4c4"/></svg>
<svg style="left:820.0px;top:140.5px" width="13" height="13"><rect x="0" y="3" width="13" height="1" fill="#c4c4c4"/><rect x="3.500" y="2" width="6" height="3" fill="#c4c4c4"/><rect x="0" y="9" width="13" height="1" fill="#c4c4c4"/><rect x="2.500" y="8" width="8" height="3" fill="#c4c4c4"/></svg>
<svg style="left:843.9px;top:140.5px" width="13" height="13"><rect x="4" y="0.500" width="5" height="3" fill="#c4c4c4"/><rect x="0" y="4.500" width="13" height="1" fill="#c4c4c4"/><rect x="2.500" y="7" width="8" height="3" fill="#c4c4c4"/><rect x="0" y="11" width="13" height="1" fill="#c4c4c4"/></svg>
<svg style="left:881.5px;top:140.5px" width="13" height="13"><rect x="1" y="0" width="1" height="13" fill="#c4c4c4"/><rect x="3" y="2.500" width="2" height="8" fill="#c4c4c4"/><rect x="7" y="0" width="1" height="13" fill="#c4c4c4"/><rect x="8.500" y="4" width="3" height="5" fill="#c4c4c4"/></svg>
<svg style="left:905.0px;top:140.5px" width="13" height="13"><rect x="3" y="0" width="1" height="13" fill="#c4c4c4"/><rect x="2" y="2.500" width="3" height="8" fill="#c4c4c4"/><rect x="9" y="0" width="1" height="13" fill="#c4c4c4"/><rect x="8" y="4" width="3" height="5" fill="#c4c4c4"/></svg>
<svg style="left:927.9px;top:140.5px" width="13" height="13"><rect x="5" y="0" width="1" height="13" fill="#c4c4c4"/><rect x="1.500" y="2.500" width="3" height="8" fill="#c4c4c4"/><rect x="11" y="0" width="1" height="13" fill="#c4c4c4"/><rect x="7.500" y="4" width="3" height="5" fill="#c4c4c4"/></svg>
<svg style="left:797.5px;top:178.7px" width="13" height="13"><rect x="3.500" y="1" width="6" height="3" fill="#c4c4c4"/><rect x="0" y="5.500" width="2" height="1" fill="#c4c4c4"/><rect x="3" y="5.500" width="9" height="1" fill="#c4c4c4"/><rect x="2.500" y="8" width="9" height="3" fill="#c4c4c4"/></svg>
<svg style="left:817.0px;top:178.7px" width="13" height="13"><rect x="1" y="3" width="3" height="9" fill="#c4c4c4"/><rect x="5.500" y="1" width="1" height="12" fill="#c4c4c4"/><rect x="8" y="4.500" width="3" height="6" fill="#c4c4c4"/><path d="M5 0.500h3" stroke="#c4c4c4" stroke-width="0.800"/></svg>
<svg style="left:923px;top:179px" width="17" height="12"><path d="M2.500 0v3h8l2 2v5.500H4V2" fill="none" stroke="#c4c4c4" stroke-width="0.900"/><path d="M0 3h4" stroke="#c4c4c4" stroke-width="0.900"/><path d="M13.500 5l1.300 1.300 1.300-1.300" fill="none" stroke="#aaa" stroke-width="0.800"/></svg>
<div class="a" style="left:946.500px;top:66.500px;width:26px;height:510px;background:#2b2b2b"></div>
<div class="a" style="left:946.500px;top:66.500px;width:1.500px;height:510px;background:#232323"></div>
<div class="a" style="left:948.500px;top:67px;width:23.500px;height:509px;background:#2c2c2c"></div>

<div class="a" style="left:949px;top:128px;width:23px;height:1.500px;background:#262626"></div>
<div class="a" style="left:949px;top:246.5px;width:23px;height:1.500px;background:#262626"></div>
<div class="a" style="left:949px;top:308px;width:23px;height:1.500px;background:#262626"></div>
<div class="a" style="left:949px;top:369px;width:23px;height:1.500px;background:#262626"></div>
<svg style="left:954px;top:75.4px" width="12" height="12"><path d="M6 1C2.500 1 0.500 3.500 0.500 6c0 2.500 2.500 4 4.500 4 1 0 1-1 0.500-1.800-0.300-0.700 0.200-1.300 1-1.300h2c2 0 3-1 3-2.500C11.500 2.500 9 1 6 1z" fill="#c4c4c4"/><circle cx="2.800" cy="5.500" r="1" fill="#303030"/><circle cx="5" cy="3.300" r="1" fill="#303030"/><circle cx="8" cy="3.300" r="1" fill="#303030"/></svg>
<svg style="left:954px;top:93.5px" width="12" height="12"><path d="M1.500 1v10h10C11.500 5 7.500 1 1.500 1z" fill="#c4c4c4"/><path d="M1.500 1v10h10" fill="none" stroke="#999" stroke-width="0.500"/></svg>
<svg style="left:954px;top:112.0px" width="12" height="12"><circle cx="4.500" cy="7" r="3.500" fill="none" stroke="#c4c4c4" stroke-width="1.100"/><circle cx="4.500" cy="7" r="1.300" fill="#c4c4c4"/><path d="M4.500 7L10 1.500M4.500 7L10 11" fill="none" stroke="#c4c4c4" stroke-width="1.100"/><circle cx="10" cy="1.500" r="1.300" fill="#c4c4c4"/><circle cx="10" cy="11" r="1.300" fill="#c4c4c4"/></svg>
<svg style="left:954px;top:136.8px" width="12" height="12"><rect x="0.500" y="2" width="11" height="8" fill="#c4c4c4"/><path d="M0.500 6h11M6 2v8" stroke="#303030" stroke-width="1"/></svg>
<svg style="left:954px;top:155.6px" width="12" height="12"><text x="5" y="11" font-size="12" fill="#c4c4c4" text-anchor="middle" font-family="Liberation Sans">A</text><rect x="10.500" y="0.500" width="0.900" height="11" fill="#c4c4c4"/></svg>
<svg style="left:954px;top:172.8px" width="12" height="12"><path d="M5 1h6v1.500H10V11H8.500V2.500h-1V11H6V7.500H5a3.300 3.300 0 0 1 0-6.500z" fill="#c4c4c4"/></svg>
<svg style="left:954px;top:191.5px" width="12" height="12"><ellipse cx="6" cy="6" rx="3.500" ry="5.300" fill="none" stroke="#c4c4c4" stroke-width="1.600" transform="rotate(12 6 6)"/></svg>
<svg style="left:954px;top:208.7px" width="12" height="12"><path d="M3 6h6l-0.800 5.500H3.800z" fill="#c4c4c4"/><path d="M6 6V1.500M6 6L3 2M6 6l3.500-3" stroke="#c4c4c4" stroke-width="1"/><circle cx="3" cy="2" r="1" fill="#c4c4c4"/><circle cx="9.500" cy="3" r="1" fill="#c4c4c4"/></svg>
<svg style="left:954px;top:226.5px" width="12" height="12"><circle cx="6" cy="3.200" r="2.500" fill="#c4c4c4"/><circle cx="3" cy="7" r="2.500" fill="#c4c4c4"/><circle cx="9" cy="7" r="2.500" fill="#c4c4c4"/><path d="M6 6v5.500M4 11.500h4" stroke="#c4c4c4" stroke-width="1.200"/></svg>
<svg style="left:954px;top:253.0px" width="12" height="12"><path d="M0.500 3h11M0.500 6h11M0.500 9h11" stroke="#c4c4c4" stroke-width="1"/></svg>
<svg style="left:954px;top:270.5px" width="12" height="12"><defs><linearGradient id="g3"><stop offset="0" stop-color="#ddd"/><stop offset="1" stop-color="#333"/></linearGradient></defs><rect x="0.500" y="2" width="11" height="8" fill="url(#g3)" stroke="#c4c4c4" stroke-width="0.900"/></svg>
<svg style="left:954px;top:289.5px" width="12" height="12"><circle cx="4.500" cy="5" r="3.800" fill="#c4c4c4"/><circle cx="7.500" cy="7.300" r="3.800" fill="#8a8a8a" stroke="#c4c4c4" stroke-width="0.500"/></svg>
<svg style="left:953.500px;top:315.800px" width="13" height="12"><path d="M3.800 10.500C1.900 10.500 0.600 9 0.600 7.300 0.600 5.600 1.900 4.300 3.500 4.200 4.200 2.200 6 1 8 1c2.600 0 4.400 2 4.400 4.500 0 2.800-1.800 5-4.400 5z" fill="none" stroke="#c4c4c4" stroke-width="1.100"/><path d="M6.500 7.500C5.500 6 3.300 5.800 3.300 7.500S5.500 9 6.500 7.500 9.700 5.800 9.700 7.500 7.500 9 6.500 7.500" fill="none" stroke="#c4c4c4" stroke-width="1"/></svg>
<svg style="left:954px;top:333.3px" width="12" height="12"><circle cx="6" cy="6" r="3.800" fill="#c4c4c4"/><circle cx="6" cy="6" r="5.300" fill="none" stroke="#c4c4c4" stroke-width="0.800" stroke-dasharray="1 1.200"/></svg>
<svg style="left:954px;top:350.8px" width="12" height="12"><rect x="4" y="0.500" width="7.500" height="7.500" fill="none" stroke="#c4c4c4" stroke-width="1.100"/><rect x="0.500" y="5" width="5" height="5" fill="#303030" stroke="#c4c4c4" stroke-width="1"/><circle cx="3" cy="7.500" r="1.500" fill="#c4c4c4"/></svg>
<svg style="left:954px;top:377.0px" width="12" height="12"><path d="M5 1.500H1v9.500h9.500V7" fill="none" stroke="#c4c4c4" stroke-width="1.100"/><path d="M5 7l6-6M7.500 1H11v3.500" fill="none" stroke="#c4c4c4" stroke-width="1.100"/></svg>
<svg style="left:954px;top:395.8px" width="12" height="12"><path d="M6 0.500L11.500 3.500 6 6.500 0.500 3.500z" fill="#c4c4c4"/><path d="M1.500 5.500L6 8 10.500 5.500 11.500 6.300 6 9.300 0.500 6.300z" fill="#c4c4c4"/><path d="M1.500 8.300L6 10.800 10.500 8.300 11.500 9 6 12 0.500 9z" fill="#c4c4c4"/></svg>
<svg style="left:954px;top:413.0px" width="12" height="12"><rect x="0.500" y="0.500" width="7" height="7" fill="none" stroke="#c4c4c4" stroke-width="1.100"/><rect x="4" y="4" width="7.500" height="7.500" fill="#303030" stroke="#c4c4c4" stroke-width="1.100"/></svg>
<!-- ===== STATUS BAR ===== -->
<div class="a" style="left:97px;top:563.500px;width:683px;height:12.500px;background:#2b2b2b"></div>
<div class="t" style="left:102px;top:567px;font-size:8px;color:#9a9a9a">150%</div>
<svg style="left:134px;top:569px" width="6" height="4"><path d="M0.500 0.500L3 3 5.500 0.500" fill="none" stroke="#888" stroke-width="0.800"/></svg>
<div class="t" style="left:149px;top:568px;font-size:6px;color:#555">I◀ ◀</div>
<div class="t" style="left:173.500px;top:567.500px;font-size:7px;color:#9a9a9a">1</div>
<svg style="left:199px;top:569px" width="6" height="4"><path d="M0.500 0.500L3 3 5.500 0.500" fill="none" stroke="#888" stroke-width="0.800"/></svg>
<div class="t" style="left:212px;top:568px;font-size:6px;color:#555">▶ ▶I</div>
<div class="t" style="left:291px;top:567.500px;font-size:7px;color:#8a8a8a">编辑</div>
<svg style="left:368px;top:567.500px" width="5" height="7"><path d="M0.500 0.500L4.500 3.500 0.500 6.500z" fill="#999"/></svg>
<div class="a" style="left:380px;top:568px;width:400px;height:8px;background:#2b2b2b"></div>
<div class="a" style="left:568px;top:568.500px;width:17px;height:7px;border-radius:3px;background:#3a3a3a"></div>

<!-- ===== VIDEO OVERLAY ===== -->
<div class="a" style="left:0;top:425px;width:1024px;height:151px;background:linear-gradient(to bottom,rgba(0,0,0,0) 0%,rgba(0,0,0,0.28) 40%,rgba(0,0,0,0.62) 100%)"></div>
<div class="a" style="left:0;top:0;width:51px;height:576px;background:#000"></div>
<div class="a" style="left:973px;top:0;width:51px;height:576px;background:#000"></div>
<svg style="left:0;top:0" width="1024" height="576" viewBox="0 0 1024 576">
<path d="M10 8.200H16M12.800 5.200L9.800 8.200 12.800 11.200" fill="none" stroke="#e0e0e0" stroke-width="1.200"/>
<path d="M1013.300 281.800L1019.500 288 1013.300 294.200" fill="none" stroke="#d8d8d8" stroke-width="1"/>
<!-- progress -->
<rect x="12.800" y="518.500" width="999" height="6" fill="rgba(0,8,20,0.3)"/>
<path d="M725 517.300H1011.700" stroke="#5a5a5a" stroke-width="0.800"/>
<path d="M12.800 517.300H725" stroke="#55a0e2" stroke-width="2.300"/>
<circle cx="729.500" cy="517.400" r="4.500" fill="#0d1b2a" stroke="#7ab2e6" stroke-width="1.400"/>
<text x="12.800" y="531" font-size="6.600" fill="#e8e8e8" font-family="Liberation Sans" letter-spacing="-0.15">0:15:06</text>
<text x="1011.500" y="531" font-size="6.600" fill="#e8e8e8" font-family="Liberation Sans" text-anchor="end" letter-spacing="-0.15">0:05:53</text>
<!-- volume -->
<path d="M21 544.500h1.600l2.400-2.400v9l-2.400-2.400H21z" fill="none" stroke="#e8e8e8" stroke-width="0.900"/>
<path d="M26.800 544.500a2.500 2.500 0 0 1 0 4M28.600 543a4.500 4.500 0 0 1 0 7M30.400 541.600a6.500 6.500 0 0 1 0 9.800" fill="none" stroke="#e8e8e8" stroke-width="0.800"/>
<!-- subtitles -->
<path d="M47.500 542.300h10.300v7.600h-7l-1.300 1.800v-1.800h-2z" fill="none" stroke="#e8e8e8" stroke-width="0.900"/>
<path d="M49.500 546.500h7M49.500 548.300h7" stroke="#bbb" stroke-width="1.100"/>
<!-- rewind 10 -->
<path d="M481.800 546.300a4.900 4.900 0 0 1 9.200-1" fill="none" stroke="#f0f0f0" stroke-width="1.100"/>
<path d="M479.300 544.300L484 545 481.300 548z" fill="#f0f0f0"/>
<text x="485.600" y="552.200" font-size="6.500" fill="#f0f0f0" font-family="Liberation Sans" text-anchor="middle">10</text>
<!-- pause -->
<path d="M510.300 542.500V551M513.700 542.500V551" stroke="#f0f0f0" stroke-width="1.100"/>
<!-- fwd 30 -->
<path d="M533.300 545.300a4.900 4.900 0 0 1 9.200 1" fill="none" stroke="#f0f0f0" stroke-width="1.100"/>
<path d="M544.700 544.300L540 545 542.700 548z" fill="#f0f0f0"/>
<text x="538.600" y="552.200" font-size="6.500" fill="#f0f0f0" font-family="Liberation Sans" text-anchor="middle">30</text>
<!-- pencil -->
<path d="M912.300 551.400l0.700-2.600 8-8 1.900 1.900-8 8z M919.600 542.400l1.900 1.900" fill="none" stroke="#e8e8e8" stroke-width="0.900"/>
<!-- pip -->
<rect x="939.300" y="543.200" width="10.600" height="6.800" fill="none" stroke="#e8e8e8" stroke-width="1"/>
<rect x="943.600" y="546.100" width="5.300" height="3.100" fill="#e8e8e8"/>
<!-- collapse -->
<path d="M965.800 552.100L970.600 547.300M967.800 547.300h2.800v2.800M977 541L972 546M972 543.200v2.800h2.800" fill="none" stroke="#e8e8e8" stroke-width="0.900"/>
<circle cx="993.600" cy="546.600" r="0.700" fill="#e8e8e8"/><circle cx="998" cy="546.600" r="0.700" fill="#e8e8e8"/><circle cx="1002.300" cy="546.600" r="0.700" fill="#e8e8e8"/>
</svg>

</body></html>
